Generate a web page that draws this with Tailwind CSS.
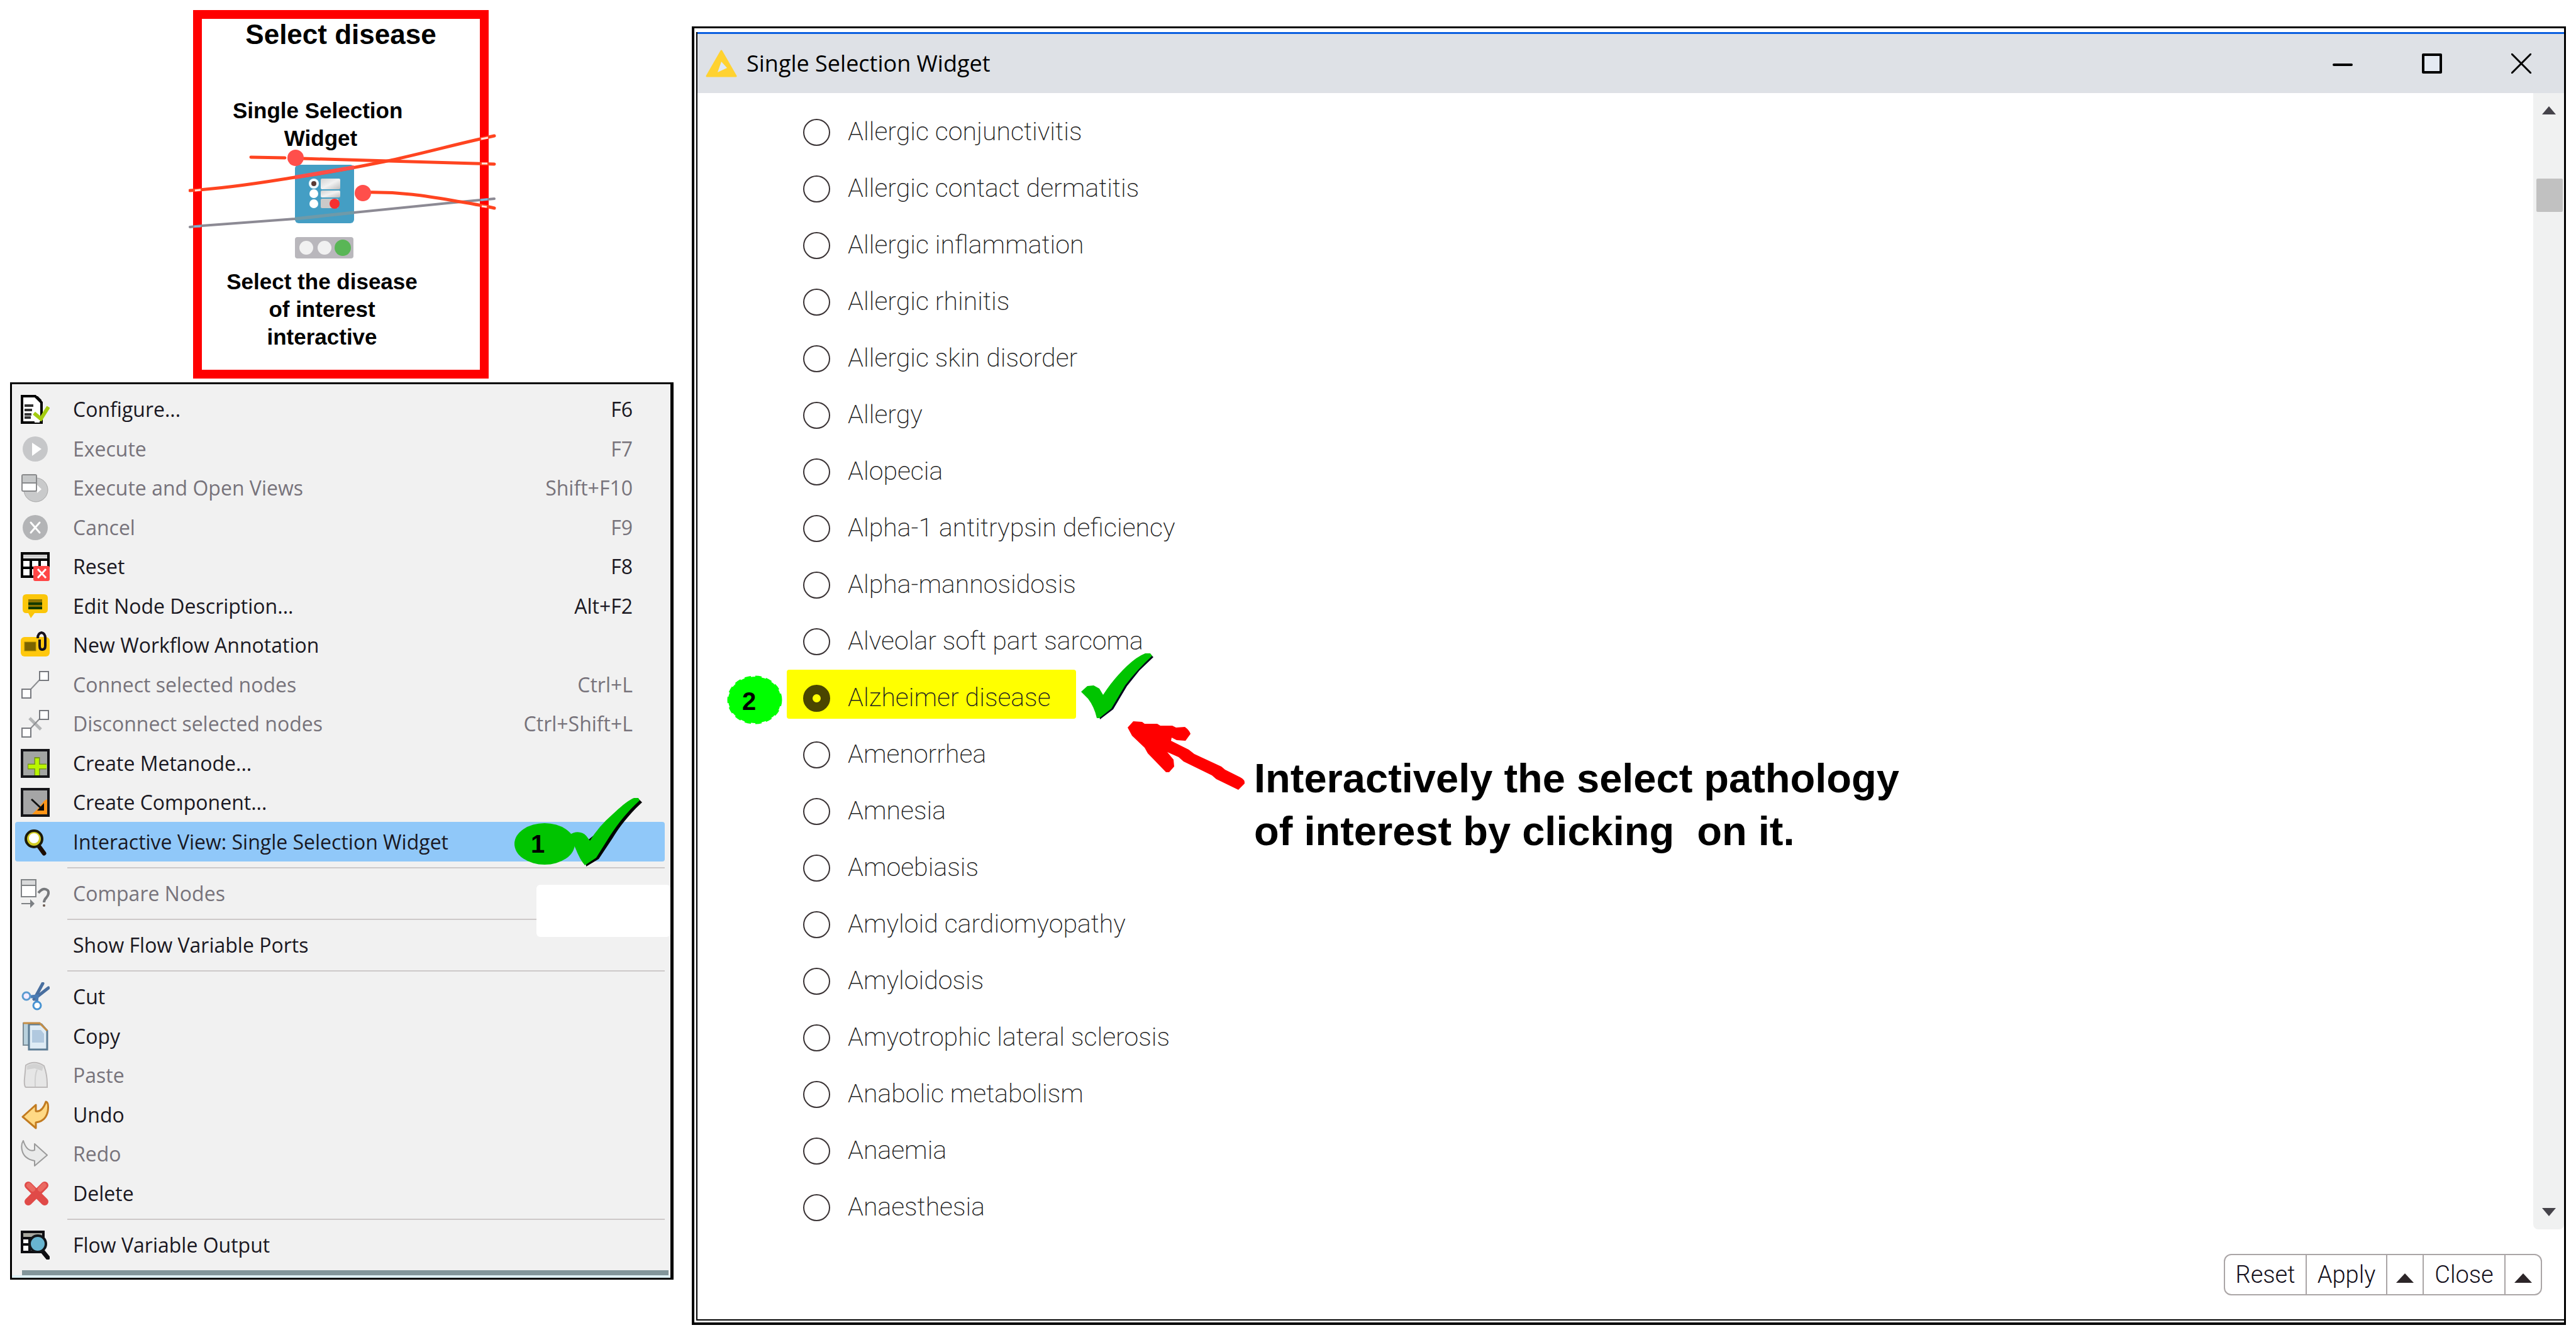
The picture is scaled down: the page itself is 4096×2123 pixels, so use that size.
<!DOCTYPE html>
<html lang="en">
<head>
<meta charset="utf-8">
<title>Single Selection Widget</title>
<script src="https://cdn.jsdelivr.net/npm/@tailwindcss/browser@4"></script>
</head>
<body class="bg-white text-black">
<main class="relative flex min-h-screen items-start gap-[29px] pr-4 pb-4">

  <div class="flex w-[1071px] shrink-0 flex-col pl-4 pt-4">
    <!-- Workflow node -->
    <section class="relative ml-[291px] h-[586px] w-[470px] border-[14px] border-[#ff0000] bg-white text-center font-bold font-['Liberation_Sans',Arial,sans-serif]">
      <h2 class="text-[44px] leading-[50px]">Select disease</h2>
      <p class="mt-[74px] pr-16 text-[35px] leading-[44px] whitespace-pre">Single Selection 
Widget</p>
      <p class="mt-[184px] pr-[60px] text-[35px] leading-[44px]">Select the disease<br>of interest<br>interactive</p>
      <svg class="absolute top-0 -left-[21px] h-[400px] w-[490px]" viewBox="300 32 490 400" fill="none" aria-hidden="true">
        <rect x="469" y="264" width="94" height="93" rx="6" fill="#449ec4"/>
        <defs><linearGradient id="bar" x1="0" y1="0" x2="1" y2="1"><stop offset="0" stop-color="#d2d2d2"/><stop offset=".5" stop-color="#f2f2f2"/><stop offset="1" stop-color="#bdbdbd"/></linearGradient></defs>
        <rect x="510" y="286" width="31" height="17" rx="2" fill="url(#bar)"/>
        <rect x="510" y="305" width="31" height="11" rx="2" fill="url(#bar)"/>
        <rect x="510" y="318" width="28" height="15" rx="2" fill="#c9c9c9"/>
        <circle cx="499" cy="294" r="8" fill="#f2fbff"/><circle cx="499" cy="294" r="4" fill="#5a3a34"/>
        <circle cx="499" cy="310" r="7" fill="#fff"/><circle cx="499" cy="326" r="7" fill="#fff"/>
        <circle cx="532" cy="326" r="8" fill="#f62f2f"/>
        <path d="M302 363 L321 361 L469 350 L563 340 L712 325 L786 318" stroke="#8c8a94" stroke-width="4" stroke-linecap="round"/>
        <path d="M469 350 L563 340" stroke="#6f9aa9" stroke-width="5"/>
        <path d="M302 305 C370 301 430 290 469 284 C530 276 580 265 621 257 C680 244 730 230 786 218" stroke="#ff4420" stroke-width="5" stroke-linecap="round"/>
        <path d="M469 284 L563 268" stroke="#ff4e48" stroke-width="6"/>
        <path d="M399 252 L453 253 M480 254 L786 263" stroke="#ff4420" stroke-width="5" stroke-linecap="round"/>
        <path d="M576 308 C650 306 700 318 745 325 C760 328 775 330 786 333" stroke="#ff4420" stroke-width="5" stroke-linecap="round"/>
        <circle cx="470" cy="253" r="13" fill="#ff4f4b"/><circle cx="577" cy="309" r="13" fill="#ff4f4b"/>
        <path d="M310 305 L319 304 M765 223 L776 221 M766 262 L775 262 M766 330 L774 331" stroke="#ffe3de" stroke-width="3"/>
        <path d="M309 362 L319 362 M765 320 L775 319" stroke="#7fb4dd" stroke-width="3"/>
        <rect x="469" y="379" width="93" height="34" rx="4" fill="#b9b7bc"/>
        <circle cx="487" cy="396" r="11" fill="#f1f1f1"/><circle cx="516" cy="396" r="11" fill="#f1f1f1"/><circle cx="545" cy="396" r="13" fill="#59b656"/>
      </svg>
    </section>

    <!-- Context menu -->
    <nav class="relative mt-[6px] border-[3px] border-r-[5px] border-black bg-[#f1f1f1] pt-[9px] text-[32px] text-[#1a1822] font-['Open_Sans','Noto_Sans',sans-serif]" aria-label="Node menu">
      <ul id="menu" class="flex flex-col pl-[5px] pr-[9px]"></ul>
      <div class="mt-[9px] mr-[3px] ml-4 h-2 bg-[#82969b]"></div>
      <div class="h-1 bg-[#def0f5]"></div>
      <div class="absolute top-[796px] right-0 h-[83px] w-[213px] rounded-md bg-white"></div>
    </nav>
  </div>

  <!-- Widget window -->
  <section class="mt-[42px] grow border-[3px] border-b-4 border-l-4 border-black bg-white pt-[6px] pb-[3px] pl-[3px]">
   <div class="border-b-2 border-l-2 border-black">
    <header class="flex h-[97px] items-center border-t-[3px] border-[#0a5fe0] bg-[#dee1e6] pl-[13px]">
      <svg class="h-[44px] w-[50px]" viewBox="0 0 50 44" aria-hidden="true"><path d="M25 2 L48 42 H2 Z" fill="#ffd231" stroke="#ffd231" stroke-width="3" stroke-linejoin="round"/><path d="M25 19 L34 29 L19 36 Z" fill="#dee8f6"/></svg>
      <h1 class="ml-[15px] text-[36px] leading-[50px] font-['Open_Sans','Noto_Sans',sans-serif]">Single Selection Widget</h1>
      <div class="ml-auto flex gap-[6px]">
        <button class="flex h-[94px] w-[136px] items-center justify-center" aria-label="Minimize"><svg class="size-8" viewBox="0 0 32 32" stroke="#000" stroke-width="4" stroke-linecap="round"><path d="M2 18 H30"/></svg></button>
        <button class="flex h-[94px] w-[136px] items-center justify-center" aria-label="Maximize"><svg class="size-8" viewBox="0 0 32 32" fill="#e4eaf2" stroke="#000" stroke-width="4" stroke-linejoin="round"><rect x="2" y="2" width="28" height="28"/></svg></button>
        <button class="flex h-[94px] w-[136px] items-center justify-center" aria-label="Close window"><svg class="size-8" viewBox="0 0 32 32" stroke="#000" stroke-width="3" stroke-linecap="round"><path d="M1 1 L31 31 M31 1 L1 31"/></svg></button>
      </div>
    </header>
    <div class="flex">
      <ul id="diseases" class="grow pt-[17px] pl-[168px] text-[41px] font-extralight text-[#222] font-[Roboto,sans-serif]"></ul>
      <div class="relative mb-[10px] flex w-[49px] flex-col items-center justify-between rounded-b-lg bg-[#f0f1f1] py-[21px]">
        <svg class="h-[13px] w-[22px]" viewBox="0 0 22 13" fill="#45434a"><path d="M11 0 L22 13 H0 Z"/></svg>
        <div class="absolute top-[136px] right-[2px] h-[53px] w-[42px] rounded-xs bg-[#c1c1c1]"></div>
        <svg class="h-[13px] w-[22px]" viewBox="0 0 22 13" fill="#45434a"><path d="M11 13 L22 0 H0 Z"/></svg>
      </div>
    </div>
    <footer class="flex justify-end pt-[29px] pr-[35px] pb-[38px]">
      <div class="flex h-[66px] divide-x-2 divide-[#aaa5a6] rounded-xl border-2 border-[#aaa5a6] text-[38px] leading-[60px] font-light text-[#14101c] font-[Roboto,sans-serif]">
        <button class="w-[130px]">Reset</button>
        <button class="w-[128px]">Apply</button>
        <button class="flex w-[58px] items-center justify-center pt-[10px]" aria-label="Apply options"><svg class="h-[15px] w-[28px]" viewBox="0 0 28 15" fill="#2c2528"><path d="M14 0 L28 15 H0 Z"/></svg></button>
        <button class="w-[130px]">Close</button>
        <button class="flex w-[56px] items-center justify-center pt-[10px]" aria-label="Close options"><svg class="h-[15px] w-[28px]" viewBox="0 0 28 15" fill="#2c2528"><path d="M14 0 L28 15 H0 Z"/></svg></button>
      </div>
    </footer>
   </div>
  </section>

  <!-- Hand-drawn marks over the windows -->
  <svg class="pointer-events-none absolute top-[1260px] left-[810px] h-[130px] w-[220px]" viewBox="810 1260 220 130" aria-hidden="true">
    <ellipse cx="866" cy="1342" rx="48" ry="33" fill="#00c400"/>
    <path d="M932 1378 L952 1366 L974 1333 C985 1315 1000 1295 1021 1276 L1015 1270 L930 1340 Z" fill="#000"/>
    <path d="M905 1328 C914 1321 926 1322 932 1329 L938 1337 Q952 1314 974 1295 C987 1283 998 1273 1008 1269 L1015 1269 L1017 1273 C998 1290 984 1308 970 1329 L948 1364 L930 1376 Q922 1367 915 1349 Z" fill="#00c400"/>
    <text x="855" y="1356" text-anchor="middle" font-family="Liberation Sans, Arial, sans-serif" font-weight="bold" font-size="40">1</text>
  </svg>
  <svg class="pointer-events-none absolute top-[1030px] left-[1150px] h-[240px] w-[840px]" viewBox="1150 1030 840 240" aria-hidden="true">
    <ellipse cx="1200" cy="1113" rx="42" ry="37" fill="#0f0" stroke="#0f0" stroke-width="3" stroke-dasharray="10 7"/>
    <text x="1191" y="1129" text-anchor="middle" font-family="Liberation Sans, Arial, sans-serif" font-weight="bold" font-size="40">2</text>
    <path d="M1749 1144 L1770 1128 L1792 1091 L1812 1066 L1834 1045 L1829 1040 L1745 1120 Z" fill="#00051c"/>
    <path d="M1719 1100 L1729 1091 L1739 1090 L1748 1095 L1754 1105 Q1770 1080 1792 1059 Q1808 1044 1821 1039 L1829 1039 L1832 1043 Q1808 1065 1789 1090 L1767 1127 L1748 1142 L1744 1142 Q1740 1124 1730 1111 Z" fill="#00c400"/>
    <path d="M1793 1157 L1802 1147 L1816 1148 L1820 1151 H1840 L1845 1154 H1864 L1870 1157 L1884 1156 Q1891 1161 1893 1167 L1885 1178 L1871 1177 L1863 1173 L1862 1178 L1890 1192 L1899 1199 L1942 1219 L1948 1224 L1972 1236 Q1980 1240 1979 1246 L1969 1256 L1934 1239 L1927 1233 L1882 1211 L1874 1204 L1856 1196 L1866 1208 L1867 1219 L1859 1228 H1854 L1825 1198 L1820 1189 L1800 1170 Z" fill="#f00"/>
  </svg>
  <p class="absolute top-[1196px] left-[1994px] text-[65px] leading-[84px] font-bold whitespace-pre font-['Liberation_Sans',Arial,sans-serif]">Interactively the select pathology
of interest by clicking  on it.</p>
</main>

<script>
const svg = body => `<svg class="size-[46px]" viewBox="0 0 46 46" fill="none" aria-hidden="true">${body}</svg>`;
const icons = {
  configure: svg('<path d="M2 2H23L33 12V44H2Z" fill="#fff" stroke="#000" stroke-width="4"/><path d="M23 2L33 14V8L27 2Z" fill="#000"/><path d="M6 17H20M6 24H18M6 31H17M6 36H16" stroke="#333" stroke-width="4"/><path d="M20 30Q24 14 30 14V44H22Z" fill="#fff"/><path d="M21 29L32 38L44 19" stroke="#a4cc10" stroke-width="6"/>'),
  execute: svg('<circle cx="23" cy="23" r="20" fill="#c6c7c9"/><path d="M18 13L33 23L18 34Z" fill="#fff"/>'),
  openViews: svg('<circle cx="24" cy="26" r="19" fill="#c9cacb" stroke="#a6a6a6"/><path d="M26 18L33 25L26 31Z" fill="#fff"/><rect x="2" y="2" width="23" height="26" rx="2" fill="#fff" stroke="#88898b" stroke-width="2"/><path d="M3 3H24V15H3Z" fill="#c6c8c9"/><path d="M2 15H25" stroke="#88898b" stroke-width="2"/>'),
  cancel: svg('<circle cx="23" cy="23" r="20" fill="#b3b4b6"/><path d="M16 15L30 31M30 15L16 31" stroke="#fff" stroke-width="3" stroke-linecap="round"/>'),
  reset: svg('<rect x="2" y="2" width="42" height="37" fill="#fff" stroke="#000" stroke-width="4"/><path d="M4 4H42V9H4Z" fill="#cfcfcf"/><path d="M2 12H44M2 25H26M16 12V39M30 12V24" stroke="#000" stroke-width="4"/><rect x="20" y="22" width="26" height="24" rx="3" fill="#ff4646"/><path d="M27 27L40 41M40 27L27 41" stroke="#fff" stroke-width="3"/>'),
  description: svg('<path d="M9 4H37Q43 4 43 10V28Q43 34 37 34H22L16 42L12 34H9Q3 34 3 28V10Q3 4 9 4Z" fill="#fbc60a"/><path d="M12 12H34V28H12Z" fill="#8c7400"/><path d="M12 19H34M12 26H34" stroke="#143a00" stroke-width="4"/>'),
  annotation: svg('<rect x="0" y="10" width="46" height="31" rx="6" fill="#ffc80e"/><rect x="6" y="18" width="18" height="14" fill="#7a6300" stroke="#a88a00"/><path d="M27 12Q27 4 33 3Q39 4 39 12V24Q39 30 34 30Q30 30 30 24V14" stroke="#15101c" stroke-width="4"/>'),
  connect: svg('<path d="M15 31L30 15" stroke="#8b8d90" stroke-width="2"/><rect x="30" y="2" width="14" height="14" fill="#fff" stroke="#77797e" stroke-width="2"/><rect x="2" y="30" width="14" height="14" fill="#fff" stroke="#77797e" stroke-width="2"/>'),
  disconnect: svg('<path d="M14 14L32 32" stroke="#b3b5b6" stroke-width="5"/><path d="M15 31L30 15" stroke="#8b8d90" stroke-width="2"/><rect x="30" y="2" width="14" height="14" fill="#fff" stroke="#77797e" stroke-width="2"/><rect x="2" y="30" width="14" height="14" fill="#fff" stroke="#77797e" stroke-width="2"/>'),
  metanode: svg('<rect x="2" y="2" width="42" height="42" fill="#a3a5a3" stroke="#16161a" stroke-width="4"/><path d="M26 13V42M11 28H41" stroke="#76961c" stroke-width="9"/><path d="M26 15V42M12 28H41" stroke="#b9f500" stroke-width="6"/>'),
  component: svg('<rect x="2" y="2" width="42" height="42" fill="#a5a5a6" stroke="#16161a" stroke-width="4"/><path d="M42 18V42H18L26 34L38 20Z" fill="#ff9518"/><path d="M17 18L31 31" stroke="#111" stroke-width="3"/><path d="M37 24V36H26Z" fill="#0c0c0c"/>'),
  magnifier: svg('<path d="M29 30L37 41" stroke="#1c0d02" stroke-width="7" stroke-linecap="round"/><circle cx="21" cy="18" r="13" fill="#d2cc22" stroke="#1c1a0a" stroke-width="4"/><circle cx="21" cy="17" r="8" fill="#fff"/>'),
  compare: svg('<rect x="1" y="1" width="23" height="27" fill="#fff" stroke="#7f8285" stroke-width="2"/><path d="M2 2H23V9H2Z" fill="#d9dadb"/><path d="M1 10H24M1 39H16" stroke="#7f8285" stroke-width="2"/><path d="M15 32L22 39L15 46Z" fill="#7c8084"/><path d="M28 22Q36 12 43 18Q46 23 41 29Q37 33 37 37" stroke="#77797c" stroke-width="4"/><circle cx="37" cy="42" r="2" fill="#6a5a50"/>'),
  cut: svg('<path d="M35 2L23 24M44 9L21 27" stroke="#496f9f" stroke-width="5" stroke-linecap="round"/><path d="M16 23L26 22L25 32" stroke="#4a7cb5" stroke-width="5"/><circle cx="9" cy="22" r="6" fill="#f5ecff" stroke="#5b9bd0" stroke-width="3"/><circle cx="26" cy="37" r="6" fill="#fff" stroke="#4793d2" stroke-width="3"/>'),
  copy: svg('<path d="M4 2H28V37H4Z" fill="#b9d1dd" stroke="#7b8c97" stroke-width="2"/><path d="M13 4H33L42 14V44H13Z" fill="#dfecf5" stroke="#5c7c94" stroke-width="3"/><path d="M4 2H30L42 14" stroke="#c68e45" stroke-width="3"/><path d="M18 13H32L37 19V33H18Z" fill="#b1c9df"/>'),
  paste: svg('<path d="M8 7Q22 -2 37 8Q42 22 42 36V42H8Q5 40 6 28Z" fill="#e6e6e6" stroke="#bcb9b9" stroke-width="2"/><path d="M10 8Q22 1 36 9L34 16L22 12L10 14Z" fill="#d2d2d2"/><path d="M23 41Q22 22 26 14" stroke="#cfcfcf" stroke-width="2"/>'),
  undo: svg('<path d="M3 26L24 7V17Q34 19 40 2Q45 3 43 17Q40 33 24 35V44Z" fill="#ffd985" stroke="#c27b20" stroke-width="3" stroke-linejoin="round"/>'),
  redo: svg('<path d="M42 25L22 7V17Q10 21 4 2Q0 8 2 17Q5 31 22 34V42Z" fill="#e9eaea" stroke="#9b9b9b" stroke-width="2" stroke-linejoin="round"/>'),
  remove: svg('<path d="M12 10L38 36M38 10L12 36" stroke="#e04a48" stroke-width="12" stroke-linecap="round"/><path d="M13 10L19 16M37 10L31 16" stroke="#ea6a62" stroke-width="8" stroke-linecap="round"/>'),
  output: svg('<rect x="2" y="2" width="34" height="32" fill="#fff" stroke="#0e0e12" stroke-width="4"/><path d="M4 4H34V10H4Z" fill="#a8a8a0"/><path d="M2 12H36M2 22H16M14 12V34" stroke="#0e0e12" stroke-width="4"/><path d="M34 32L43 43" stroke="#0e0e12" stroke-width="7" stroke-linecap="round"/><circle cx="27" cy="21" r="13" fill="#68b5d0" stroke="#12161a" stroke-width="4"/>')
};
const groups = [
  [['configure','Configure...','F6'],['execute','Execute','F7',1],['openViews','Execute and Open Views','Shift+F10',1],['cancel','Cancel','F9',1],['reset','Reset','F8'],['description','Edit Node Description...','Alt+F2'],['annotation','New Workflow Annotation',''],['connect','Connect selected nodes','Ctrl+L',1],['disconnect','Disconnect selected nodes','Ctrl+Shift+L',1],['metanode','Create Metanode...',''],['component','Create Component...',''],['magnifier','Interactive View: Single Selection Widget','']],
  [['compare','Compare Nodes','',1]],
  [['','Show Flow Variable Ports','']],
  [['cut','Cut',''],['copy','Copy',''],['paste','Paste','',1],['undo','Undo',''],['redo','Redo','',1],['remove','Delete','']],
  [['output','Flow Variable Output','']]
];
document.getElementById('menu').innerHTML = groups.map(rows => '<li><ul>' + rows.map(([icon, label, key, off]) =>
  `<li class="odd:h-[62px] even:h-[63px]"><button class="flex h-full w-full items-center rounded-sm pr-[51px] pl-[9px] disabled:text-[#77737b] ${icon === 'magnifier' ? 'bg-[#90c8f9]' : ''}" ${off ? 'disabled' : ''}><span class="mr-[37px] w-[46px]">${icons[icon] || ''}</span><span>${label}</span><span class="ml-auto">${key}</span></button></li>`
).join('') + '</ul></li>').join('<li class="flex h-5 items-center pl-[83px]" role="separator"><span class="h-[2px] w-full bg-[#cdc9c9]"></span></li>');

const names = ['Allergic conjunctivitis','Allergic contact dermatitis','Allergic inflammation','Allergic rhinitis','Allergic skin disorder','Allergy','Alopecia','Alpha-1 antitrypsin deficiency','Alpha-mannosidosis','Alveolar soft part sarcoma','Alzheimer disease','Amenorrhea','Amnesia','Amoebiasis','Amyloid cardiomyopathy','Amyloidosis','Amyotrophic lateral sclerosis','Anabolic metabolism','Anaemia','Anaesthesia'];
document.getElementById('diseases').innerHTML = names.map(name => {
  const on = name === 'Alzheimer disease';
  return `<li class="relative isolate h-[90px]">${on ? '<span class="absolute top-0 -left-[26px] -z-10 h-[78px] w-[460px] rounded-sm bg-[#ff0]"></span>' : ''}<label class="flex h-full items-center gap-7"><input type="radio" name="disease" class="size-[43px] appearance-none rounded-full border-2 border-[#3a3335] checked:border-[15px] checked:border-[#4a4600]" ${on ? 'checked' : ''}>${name}</label></li>`;
}).join('');
</script>
</body>
</html>
